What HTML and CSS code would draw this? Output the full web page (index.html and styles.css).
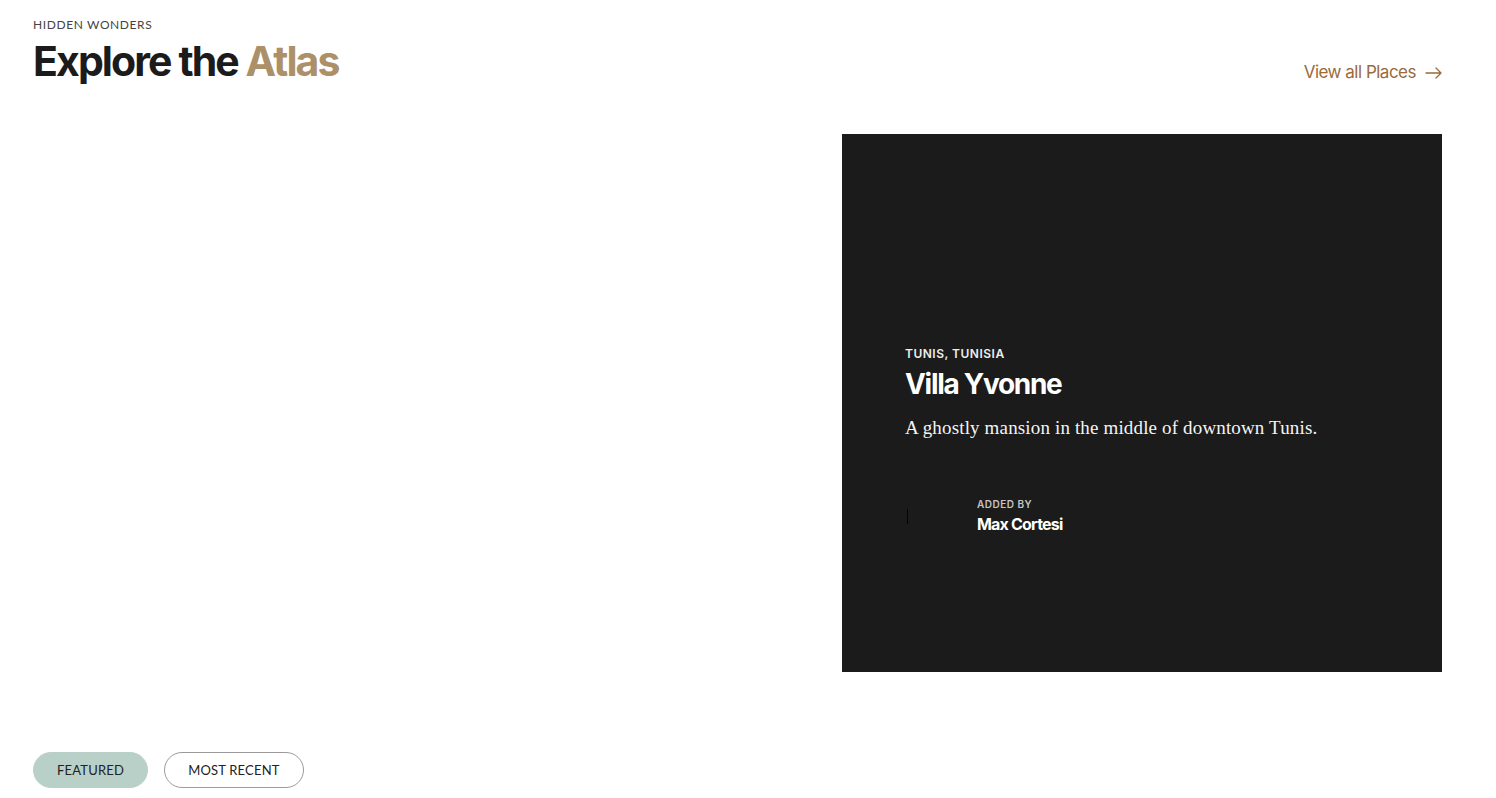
FILE: index.html
```html
<!DOCTYPE html>
<html lang="en">
<head>
<meta charset="utf-8">
<title>Explore the Atlas</title>
<link rel="stylesheet" href="styles.css">
</head>
<body>
<main class="page">
  <header class="head">
    <div class="titles">
      <div class="eyebrow">HIDDEN WONDERS</div>
      <h1 class="title">Explore the <span class="accent">Atlas</span></h1>
    </div>
    <a class="view-all" href="#">View all Places
      <svg class="arrow" width="17" height="12" viewBox="0 0 17 12" fill="none" stroke="currentColor" stroke-width="1.3" stroke-linecap="round" stroke-linejoin="round"><path d="M1 6h15M11 1l5 5-5 5"/></svg>
    </a>
  </header>

  <section class="stage">
    <div class="map"></div>
    <article class="card">
      <div class="card-body">
        <div class="loc">TUNIS, TUNISIA</div>
        <h2 class="place">Villa Yvonne</h2>
        <p class="desc">A ghostly mansion in the middle of downtown Tunis.</p>
        <div class="author">
          <div class="avatar"><span class="avatar-edge"></span></div>
          <div class="author-info">
            <div class="added">ADDED BY</div>
            <div class="name">Max Cortesi</div>
          </div>
        </div>
      </div>
    </article>
  </section>

  <nav class="tabs">
    <button class="tab active">FEATURED</button>
    <button class="tab">MOST RECENT</button>
  </nav>
</main>
</body>
</html>
```

FILE: styles.css
```css
* { box-sizing: border-box; }
html, body { margin: 0; padding: 0; background: #fff; }
body { font-family: "Inter", "Liberation Sans", sans-serif; color: #1b1b1b; }

.page {
  padding: 18px 54px 0 33px;
  display: flex;
  flex-direction: column;
}

.head {
  display: flex;
  justify-content: space-between;
  align-items: flex-end;
}
.eyebrow {
  font-family: "Lato", "Liberation Sans", sans-serif;
  font-size: 12px;
  letter-spacing: 0.6px;
  color: #444;
  line-height: 14px;
}
.title {
  margin: 4px 0 0;
  font-size: 41px;
  font-weight: 700;
  letter-spacing: -1.9px;
  line-height: 50px;
  color: #1b1b1b;
}
.accent { color: #ab9068; }

.view-all {
  display: flex;
  align-items: center;
  gap: 9px;
  color: #9a6a3a;
  text-decoration: none;
  font-size: 17px;
  letter-spacing: -0.5px;
  margin-bottom: 4px;
}
.arrow { display: block; margin-top: 1px; }

.stage {
  margin-top: 48px;
  display: flex;
  justify-content: flex-end;
  height: 538px;
}
.map { flex: 1; }
.card {
  width: 600px;
  height: 538px;
  background: #1b1b1b;
  color: #fff;
}
.card-body { padding: 213px 63px 0; }
.loc {
  font-size: 12px;
  font-weight: 600;
  letter-spacing: 0.5px;
  line-height: 14px;
  color: #eee;
}
.place {
  margin: 6px 0 0;
  font-size: 28px;
  font-weight: 700;
  letter-spacing: -1.3px;
  line-height: 34px;
}
.desc {
  margin: 14px 0 0;
  font-family: "Liberation Serif", serif;
  font-size: 19px;
  letter-spacing: 0.15px;
  line-height: 26px;
  color: #f4f4f4;
}
.author {
  margin-top: 55px;
  display: flex;
  align-items: center;
  gap: 12px;
}
.avatar {
  width: 60px;
  height: 40px;
  display: flex;
  align-items: center;
  padding-left: 2px;
}
.avatar-edge {
  width: 1px;
  height: 15px;
  background: #050505;
}
.added {
  font-size: 10px;
  font-weight: 600;
  letter-spacing: 0.5px;
  color: #c4c4c4;
  line-height: 12px;
}
.name {
  margin-top: 4px;
  font-size: 16px;
  font-weight: 700;
  letter-spacing: -0.8px;
  line-height: 20px;
}

.tabs {
  margin-top: 80px;
  display: flex;
  gap: 16px;
}
.tab {
  height: 36px;
  border-radius: 18px;
  border: 1px solid #9a9a9a;
  background: #fff;
  padding: 0 23px;
  font-family: "Lato", "Liberation Sans", sans-serif;
  font-size: 13px;
  letter-spacing: 0.2px;
  color: #222;
  cursor: pointer;
}
.tab.active {
  background: #b9d0c9;
  border-color: #b9d0c9;
}
```
